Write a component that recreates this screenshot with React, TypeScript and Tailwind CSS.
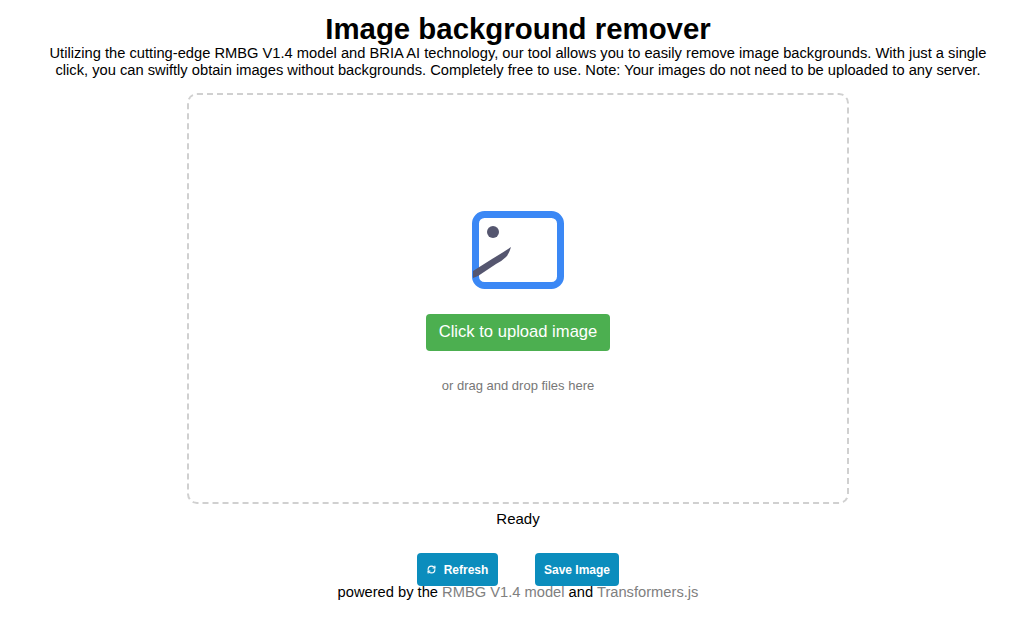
import { RefreshCw } from 'lucide-react';

const ImageIcon = () => (
  <svg width="92" height="78" viewBox="0 0 92 78" fill="none">
    <circle cx="21" cy="21" r="6" fill="#55566f" />
    <rect x="3.5" y="3.5" width="85" height="71" rx="9" stroke="#3b88f5" strokeWidth="7" />
    <path d="M1 60 L20 48 Q30 42 39 36 Q37 43 34 46 Q30 50 24 53 L6 65 L1 67 Z" fill="#55566f" />
  </svg>
);

const App = () => {
  return (
    <main className="flex h-[620px] w-full flex-col items-center overflow-hidden bg-white pl-[12px] font-['Liberation_Sans',Arial,sans-serif]">
      <h1 className="mt-[13px] text-[29.4px] leading-[32px] font-bold text-black">Image background remover</h1>
      <p className="w-[950px] text-center text-[14.7px] leading-[17px] text-black">
        Utilizing the cutting-edge RMBG V1.4 model and BRIA AI technology, our tool allows you to easily remove image
        backgrounds. With just a single click, you can swiftly obtain images without backgrounds. Completely free to
        use. Note: Your images do not need to be uploaded to any server.
      </p>
      <div className="mt-[14px] flex h-[411px] w-[662px] flex-col items-center rounded-[10px] border-2 border-dashed border-[#d0d0d0] pt-[116px]">
        <ImageIcon />
        <button className="mt-[25px] h-[37px] w-[184px] rounded-[4px] bg-[#4caf50] text-[16.6px] text-white">
          Click to upload image
        </button>
        <p className="mt-[27px] text-[13px] leading-[16px] text-[#777777]">or drag and drop files here</p>
      </div>
      <p className="mt-[6px] text-[15px] leading-[18px] text-black">Ready</p>
      <div className="z-10 mt-[25px] flex gap-[37px]">
        <button className="flex h-[33px] w-[81px] items-center justify-center gap-[8px] rounded-[4px] bg-[#0b8dbd] text-[12px] font-bold text-white">
          <RefreshCw size={9} strokeWidth={3} />
          Refresh
        </button>
        <button className="h-[33px] w-[84px] rounded-[4px] bg-[#0b8dbd] text-[12px] font-bold text-white">
          Save Image
        </button>
      </div>
      <p className="-mt-[2px] text-[14.7px] leading-[16px] text-black">
        powered by the <a className="text-[#808080]">RMBG V1.4 model</a> and{' '}
        <a className="text-[#808080]">Transformers.js</a>
      </p>
    </main>
  );
};

export default App;
